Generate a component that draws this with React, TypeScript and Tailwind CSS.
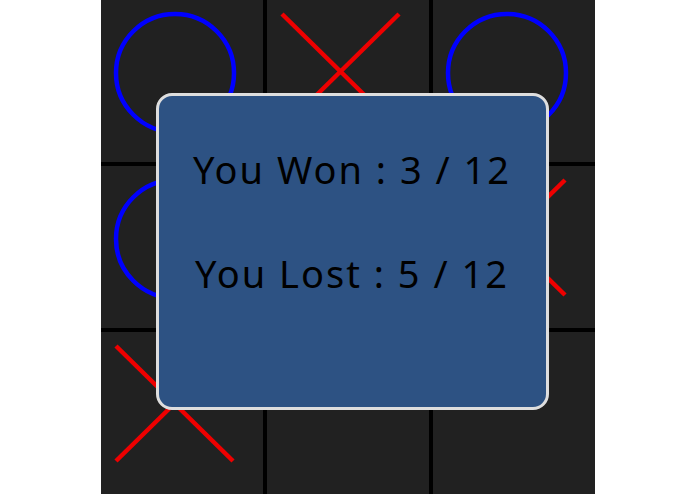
import React from 'react';

type Piece = 'X' | 'O' | null;

const board: Piece[] = ['O', 'X', 'O', 'O', null, 'X', 'X', null, null];

function Mark({ piece }: { piece: Piece }) {
  if (!piece) return null;
  return (
    <svg width="162" height="162" viewBox="0 0 162 162">
      {piece === 'O' ? (
        <circle cx="74" cy="73" r="59" fill="none" stroke="#0000ff" strokeWidth="4.5" />
      ) : (
        <g stroke="#ee0000" strokeWidth="4.5">
          <line x1="15" y1="14" x2="132" y2="129" />
          <line x1="15" y1="129" x2="132" y2="14" />
        </g>
      )}
    </svg>
  );
}

export default function App() {
  return (
    <div className="min-h-screen bg-white flex justify-center">
      <div className="relative w-[494px] h-[494px] bg-black grid grid-cols-[162px_162px_162px] grid-rows-[162px_162px_162px] gap-[4px]">
        {board.map((piece, i) => (
          <div key={i} className="bg-[#212121] overflow-hidden">
            <Mark piece={piece} />
          </div>
        ))}

        <div className="absolute left-[55px] top-[93px] w-[393px] h-[317px] rounded-[16px] border-[3px] border-[#dedede] bg-[#2d5283] flex flex-col items-center pt-[54px] gap-[66px] font-['Noto_Sans',sans-serif] text-black">
          <p className="text-[38px] leading-[38px] tracking-[2px]">You Won : 3 / 12</p>
          <p className="text-[38px] leading-[38px] tracking-[2px]">You Lost : 5 / 12</p>
        </div>
      </div>
    </div>
  );
}
